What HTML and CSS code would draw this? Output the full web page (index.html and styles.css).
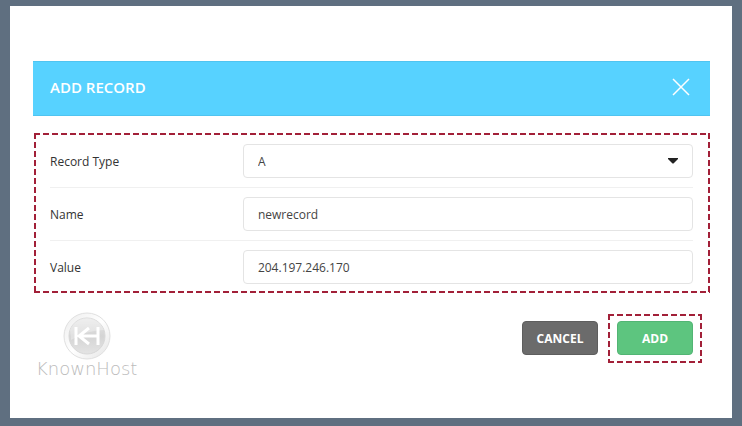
FILE: index.html
```
<!DOCTYPE html>
<html lang="en">
<head>
	<meta charset="utf-8">
	<title>Add Record</title>
	<link rel="stylesheet" href="styles.css">
</head>
<body>
	<div class="page">
		<form class="dialog">
			<div class="header">
				<h1>ADD RECORD</h1>
				<button type="button" class="close" aria-label="Close">
					<svg width="18" height="18" viewBox="0 0 18 18"><path d="M1 1L17 17M17 1L1 17"/></svg>
				</button>
			</div>

			<div class="fields marked">
				<div class="row">
					<label for="type">Record Type</label>
					<div class="select">
						<select id="type"><option>A</option></select>
						<svg width="10" height="6" viewBox="0 0 10 6"><path d="M0 0H10V1L6 5Q5 6 4 5L0 1Z"/></svg>
					</div>
				</div>
				<div class="row">
					<label for="name">Name</label>
					<input type="text" id="name" value="newrecord">
				</div>
				<div class="row">
					<label for="value">Value</label>
					<input type="text" id="value" value="204.197.246.170">
				</div>
			</div>

			<div class="footer">
				<div class="logo">
					<svg width="50" height="50" viewBox="0 0 50 50">
						<defs>
							<linearGradient id="ring" x1="0" y1="0" x2="1" y2="1">
								<stop offset="0" stop-color="#ececec"/>
								<stop offset=".5" stop-color="#fff"/>
								<stop offset="1" stop-color="#e4e4e4"/>
							</linearGradient>
							<linearGradient id="disc" x1="0" y1="0" x2="0" y2="1">
								<stop offset="0" stop-color="#e8e8e8"/>
								<stop offset=".5" stop-color="#d4d4d4"/>
								<stop offset="1" stop-color="#e4e4e4"/>
							</linearGradient>
						</defs>
						<circle cx="25" cy="25" r="23" fill="url(#ring)" stroke="#e0e0e0"/>
						<circle cx="25" cy="25" r="18" fill="url(#disc)" stroke="#d8d8d8"/>
						<path d="M8 19A18 18 0 0 1 42 19Q25 19 9 29Z" fill="#fff" opacity=".3"/>
						<path d="M14 16V34M27 17L17 25L27 33M17 25H36M36 16V34" fill="none" stroke="#fff" stroke-width="3"/>
					</svg>
					<span>KnownHost</span>
				</div>
				<button type="button" class="btn cancel">CANCEL</button>
				<div class="add-box marked">
					<button type="submit" class="btn add">ADD</button>
				</div>
			</div>
		</form>
	</div>
</body>
</html>
```
FILE: styles.css
```
* {
	box-sizing: border-box;
	margin: 0;
	padding: 0;
}
body {
	display: flex;
	min-height: 100vh;
	padding: 6px 10px 8px;
	background: #5f6f80;
	font-family: "Open Sans", sans-serif;
	font-size: 12px;
	color: #333;
}
.page {
	flex: 1;
	padding: 55px 22px 30px 23px;
	background: #fff;
}
.header {
	display: flex;
	align-items: center;
	justify-content: space-between;
	height: 55px;
	padding: 0 20px 3px 17px;
	background: #57d2ff;
	border: 1px solid #50c4f0;
	border-width: 1px 0;
}
.header h1 {
	font-size: 15px;
	font-weight: 600;
	color: #fff;
}
.close {
	display: flex;
	border: 0;
	background: none;
	cursor: pointer;
}
.close path {
	stroke: #fff;
	stroke-width: 1.5;
}

/* dashed outline, 6px dash and 3px gap */
.marked {
	--dash: #a22038 0 6px, transparent 6px 9px;
	background:
		repeating-linear-gradient(90deg, var(--dash)) 0 0 / 100% 2px no-repeat,
		repeating-linear-gradient(90deg, var(--dash)) 0 100% / 100% 2px no-repeat,
		repeating-linear-gradient(var(--dash)) 0 0 / 2px 100% no-repeat,
		repeating-linear-gradient(var(--dash)) 100% 0 / 2px 100% no-repeat;
}
.fields {
	margin: 17px 0 0 1px;
	padding: 2px 17px 0 16px;
}
.row {
	display: flex;
	align-items: center;
	padding: 9px 0;
	border-bottom: 1px solid #f0f0f0;
}
.row:last-child {
	border-bottom: 0;
}
.row label {
	width: 30%;
	font-weight: 500;
}
.select {
	position: relative;
	display: flex;
	width: 70%;
}
.row input,
.row select {
	width: 70%;
	height: 34px;
	padding: 0 14px;
	border: 1px solid #e4e4e4;
	border-radius: 4px;
	background: #fff;
	font: inherit;
	color: #444;
	appearance: none;
}
.row .select select {
	width: 100%;
}
.select svg {
	position: absolute;
	top: 14px;
	right: 15px;
	fill: #222;
	pointer-events: none;
}

.footer {
	display: flex;
	align-items: flex-start;
	padding: 18px 8px 0 3px;
}
.logo {
	display: flex;
	flex-direction: column;
	align-items: center;
	margin-right: auto;
	font: 200 18px/16px "DejaVu Sans", sans-serif;
	color: #bbb;
}
.add-box {
	margin-top: 3px;
	padding: 7px 9px 8px;
}
.btn {
	width: 76px;
	height: 34px;
	border: 1px solid;
	border-radius: 4px;
	font: 700 12px "Open Sans", sans-serif;
	color: #fff;
	cursor: pointer;
}
.cancel {
	margin: 10px 10px 0 0;
	background: #6b6b6b;
	border-color: #5e5e5e;
}
.add {
	display: block;
	background: #5dc57f;
	border-color: #52b574;
}
```
